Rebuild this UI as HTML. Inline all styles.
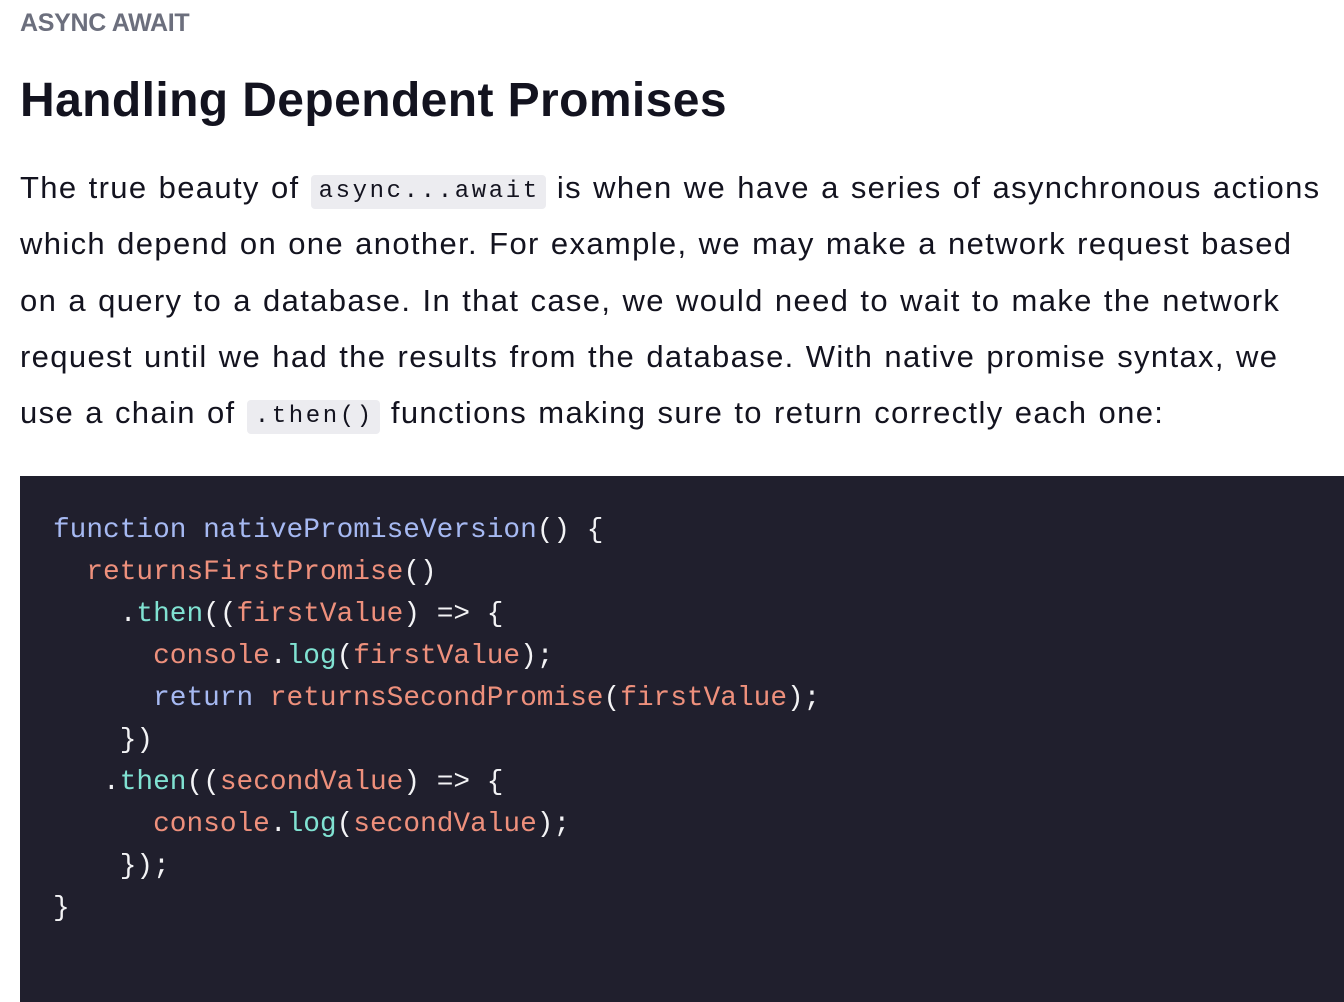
<!DOCTYPE html>
<html><head><meta charset="utf-8"><style>
body{margin:0;background:#fff;width:1344px;height:1002px;overflow:hidden;font-family:"Liberation Sans",sans-serif;color:#13131f}
.lab{position:absolute;left:20px;top:9px;font-size:25px;font-weight:bold;color:#6c6f7d;letter-spacing:-0.3px}
h1{position:absolute;left:20px;top:71px;margin:0;font-size:48px;font-weight:bold;letter-spacing:0.4px;line-height:60px}
.p{position:absolute;left:20px;top:160px;font-size:31px;line-height:56.3px;white-space:nowrap;letter-spacing:1.35px;word-spacing:1.2px}
code{display:inline-block;line-height:34px;font-family:"Liberation Mono",monospace;font-size:24px;letter-spacing:2.6px;background:#ececf0;border-radius:4px;padding:0 6px 0 8px;word-spacing:0;vertical-align:1px}
.cb{position:absolute;left:20px;top:476px;width:1324px;height:526px;background:#201f2d}
pre{margin:0;position:absolute;left:33px;top:34px;font-family:"Liberation Mono",monospace;font-size:27.8px;line-height:42px;color:#f3f3f5}
.b{color:#a6b9f2}.o{color:#ee907c}.t{color:#80e2d2}
</style></head><body>
<div class="lab">ASYNC AWAIT</div>
<h1>Handling Dependent Promises</h1>
<div class="p">The true beauty of <code>async...await</code> is when we have a series of asynchronous actions<br>which depend on one another. For example, we may make a network request based<br>on a query to a database. In that case, we would need to wait to make the network<br>request until we had the results from the database. With native promise syntax, we<br>use a chain of <code>.then()</code> functions making sure to return correctly each one:</div>
<div class="cb"><pre><span class="b">function nativePromiseVersion</span>() {
  <span class="o">returnsFirstPromise</span>()
    .<span class="t">then</span>((<span class="o">firstValue</span>) =&gt; {
      <span class="o">console</span>.<span class="t">log</span>(<span class="o">firstValue</span>);
      <span class="b">return</span> <span class="o">returnsSecondPromise</span>(<span class="o">firstValue</span>);
    })
   .<span class="t">then</span>((<span class="o">secondValue</span>) =&gt; {
      <span class="o">console</span>.<span class="t">log</span>(<span class="o">secondValue</span>);
    });
}</pre></div>
</body></html>
